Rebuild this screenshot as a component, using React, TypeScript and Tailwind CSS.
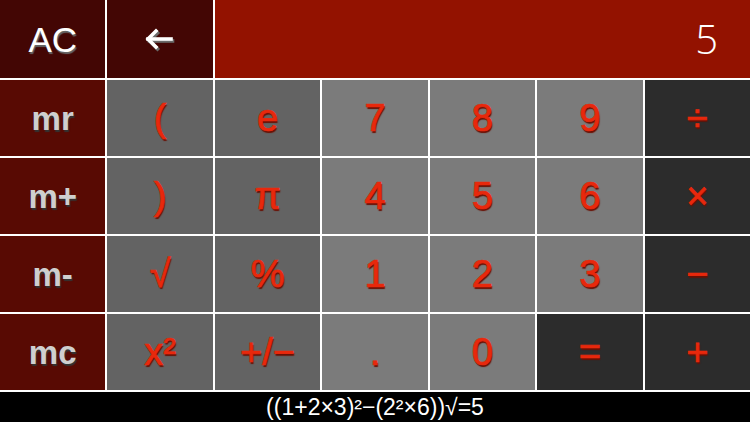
import React from "react";

type Kind = "mem" | "dark" | "light" | "op";

const bgFor: Record<Kind, string> = {
  mem: "bg-[#580a03]",
  dark: "bg-[#636363]",
  light: "bg-[#7b7b7b]",
  op: "bg-[#2c2c2c]",
};

function Key({ label, kind }: { label: React.ReactNode; kind: Kind }) {
  const text =
    kind === "mem"
      ? "text-[#cfcfcf] [text-shadow:1px_2px_1px_#333] text-[33px] font-bold"
      : "text-[#e8280c] [text-shadow:1px_2px_1px_#6a1004] [-webkit-text-stroke:0.7px_#e8280c] text-[38px] font-normal";
  return (
    <div className={`${bgFor[kind]} flex items-center justify-center`}>
      <span className={`${text} leading-none`}>{label}</span>
    </div>
  );
}

export default function App() {
  const rows: [React.ReactNode, Kind][][] = [
    [["mr", "mem"], ["(", "dark"], ["e", "dark"], ["7", "light"], ["8", "light"], ["9", "light"], ["÷", "op"]],
    [["m+", "mem"], [")", "dark"], ["π", "dark"], ["4", "light"], ["5", "light"], ["6", "light"], ["×", "op"]],
    [["m-", "mem"], ["√", "dark"], ["%", "dark"], ["1", "light"], ["2", "light"], ["3", "light"], ["−", "op"]],
    [["mc", "mem"], ["x²", "dark"], ["+/−", "dark"], [".", "light"], ["0", "light"], ["=", "op"], ["+", "op"]],
  ];
  return (
    <div className="w-[750px] h-[422px] flex flex-col bg-black overflow-hidden font-['Liberation_Sans','DejaVu_Sans',sans-serif]">
      <div className="grid grid-cols-7 grid-rows-[78px_repeat(4,76px)] gap-[2px] bg-white pb-[2px] h-[392px]">
        <div className="bg-[#430604] flex items-center justify-center">
          <span className="text-white text-[35px] leading-none [text-shadow:1px_2px_1px_#666]">AC</span>
        </div>
        <div className="bg-[#430604] flex items-center justify-center">
          <svg width="30" height="22" viewBox="0 0 30 22" className="overflow-visible">
            <g transform="translate(1.5,2)" stroke="#6a6a6a" strokeWidth="3.6" fill="none" strokeLinecap="square">
              <path d="M3 11H26" />
              <path d="M11 3L3 11L11 19" />
            </g>
            <g stroke="#ffffff" strokeWidth="3.6" fill="none" strokeLinecap="square">
              <path d="M3 11H26" />
              <path d="M11 3L3 11L11 19" />
            </g>
          </svg>
        </div>
        <div className="col-span-5 bg-[#931200] flex items-center justify-end pr-[32px]">
          <span className="text-white text-[40px] leading-none font-light font-['Open_Sans','Liberation_Sans',sans-serif]">5</span>
        </div>
        {rows.flat().map(([label, kind], i) => (
          <Key key={i} label={label} kind={kind} />
        ))}
      </div>
      <div className="flex-1 flex items-center justify-center text-white text-[23px] leading-none">
        ((1+2×3)²−(2²×6))√=5
      </div>
    </div>
  );
}
